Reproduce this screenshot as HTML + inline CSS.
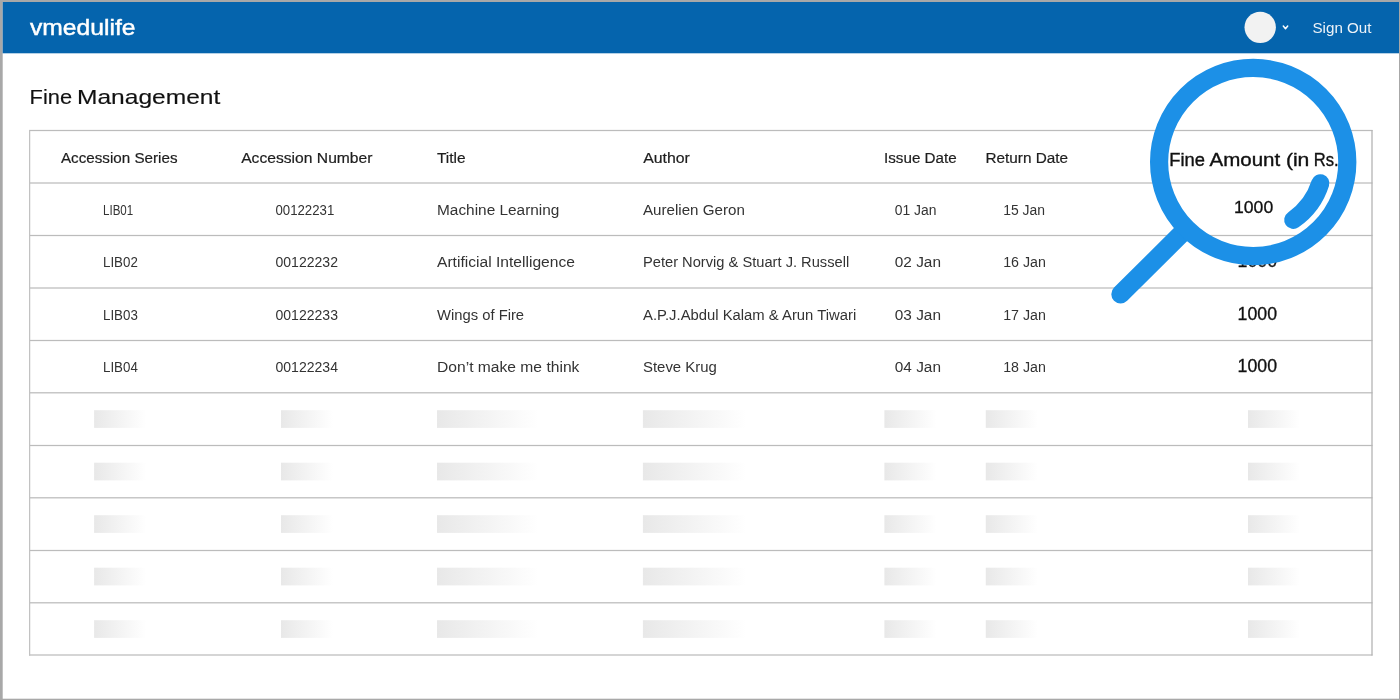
<!DOCTYPE html>
<html><head><meta charset="utf-8"><style>
html,body{margin:0;padding:0;width:1400px;height:700px;overflow:hidden;background:#a8a8a8;}
svg{display:block;font-family:"Liberation Sans", sans-serif;will-change:transform;}
</style></head><body>
<svg width="1400" height="700" viewBox="0 0 1400 700">
<rect x="0" y="0" width="1400" height="700" fill="#a8a8a8"/>
<rect x="2.7" y="2" width="1396.3" height="696.7" fill="#ffffff"/>
<rect x="2.7" y="2" width="1396.3" height="51.3" fill="#0564ad"/>
<text x="30.0" y="34.6" font-size="22.6" font-weight="400" fill="#ffffff" stroke="#ffffff" stroke-width="0.45" textLength="105.5" lengthAdjust="spacingAndGlyphs">vmedulife</text>
<circle cx="1260.2" cy="27.35" r="15.7" fill="#f2f2f2"/>
<path d="M1283.3 26.1 L1285.5 28.7 L1287.7 26.1" stroke="#ffffff" stroke-width="1.5" fill="none" stroke-linecap="round" stroke-linejoin="round"/>
<text x="1312.5" y="32.9" font-size="14.8" font-weight="400" fill="#eef3f8" textLength="59" lengthAdjust="spacingAndGlyphs">Sign Out</text>
<text x="29.6" y="104.3" font-size="21" font-weight="400" fill="#111111" stroke="#111111" stroke-width="0.15" textLength="42.5" lengthAdjust="spacingAndGlyphs">Fine</text>
<text x="77.0" y="104.3" font-size="21" font-weight="400" fill="#111111" stroke="#111111" stroke-width="0.15" textLength="143.3" lengthAdjust="spacingAndGlyphs">Management</text>
<rect x="30" y="130" width="1" height="525.6" fill="#f0f0f0"/>
<rect x="29" y="129.875" width="1343.5" height="1.25" fill="#bcbcbc"/>
<rect x="29" y="182.375" width="1343.5" height="1.25" fill="#bcbcbc"/>
<rect x="29" y="234.875" width="1343.5" height="1.25" fill="#bcbcbc"/>
<rect x="29" y="287.375" width="1343.5" height="1.25" fill="#bcbcbc"/>
<rect x="29" y="339.875" width="1343.5" height="1.25" fill="#bcbcbc"/>
<rect x="29" y="392.175" width="1343.5" height="1.25" fill="#bcbcbc"/>
<rect x="29" y="444.875" width="1343.5" height="1.25" fill="#bcbcbc"/>
<rect x="29" y="497.175" width="1343.5" height="1.25" fill="#bcbcbc"/>
<rect x="29" y="549.875" width="1343.5" height="1.25" fill="#bcbcbc"/>
<rect x="29" y="602.175" width="1343.5" height="1.25" fill="#bcbcbc"/>
<rect x="29" y="654.375" width="1343.5" height="1.25" fill="#bcbcbc"/>
<rect x="29" y="130" width="1" height="525.6" fill="#c2c2c2"/>
<rect x="1371.35" y="130" width="1.3" height="525.6" fill="#b4b4b4"/>
<text x="60.95" y="162.5" font-size="14.7" font-weight="400" fill="#1e1e1e" stroke="#1e1e1e" stroke-width="0.2" textLength="116.55" lengthAdjust="spacingAndGlyphs">Accession Series</text>
<text x="241.2" y="162.5" font-size="14.7" font-weight="400" fill="#1e1e1e" stroke="#1e1e1e" stroke-width="0.2" textLength="131.3" lengthAdjust="spacingAndGlyphs">Accession Number</text>
<text x="436.9" y="162.5" font-size="14.7" font-weight="400" fill="#1e1e1e" stroke="#1e1e1e" stroke-width="0.2" textLength="28.600000000000012" lengthAdjust="spacingAndGlyphs">Title</text>
<text x="643.2" y="162.5" font-size="14.7" font-weight="400" fill="#1e1e1e" stroke="#1e1e1e" stroke-width="0.2" textLength="46.699999999999974" lengthAdjust="spacingAndGlyphs">Author</text>
<text x="884.0" y="162.5" font-size="14.7" font-weight="400" fill="#1e1e1e" stroke="#1e1e1e" stroke-width="0.2" textLength="72.70000000000009" lengthAdjust="spacingAndGlyphs">Issue Date</text>
<text x="985.5" y="162.5" font-size="14.7" font-weight="400" fill="#1e1e1e" stroke="#1e1e1e" stroke-width="0.2" textLength="82.59999999999995" lengthAdjust="spacingAndGlyphs">Return Date</text>
<text x="103.0" y="214.75" font-size="14" font-weight="400" fill="#333333" textLength="30.2" lengthAdjust="spacingAndGlyphs">LIB01</text>
<text x="275.5" y="214.75" font-size="14" font-weight="400" fill="#333333" textLength="58.75" lengthAdjust="spacingAndGlyphs">00122231</text>
<text x="437.0" y="214.75" font-size="14" font-weight="400" fill="#333333" textLength="122.4" lengthAdjust="spacingAndGlyphs">Machine Learning</text>
<text x="643.0" y="214.75" font-size="14" font-weight="400" fill="#333333" textLength="101.8" lengthAdjust="spacingAndGlyphs">Aurelien Geron</text>
<text x="894.8" y="214.75" font-size="14" font-weight="400" fill="#333333" textLength="41.7" lengthAdjust="spacingAndGlyphs">01 Jan</text>
<text x="1003.2" y="214.75" font-size="14" font-weight="400" fill="#333333" textLength="41.800000000000004" lengthAdjust="spacingAndGlyphs">15 Jan</text>
<text x="103.0" y="267.25" font-size="14" font-weight="400" fill="#333333" textLength="34.8" lengthAdjust="spacingAndGlyphs">LIB02</text>
<text x="275.5" y="267.25" font-size="14" font-weight="400" fill="#333333" textLength="62.5" lengthAdjust="spacingAndGlyphs">00122232</text>
<text x="437.0" y="267.25" font-size="14" font-weight="400" fill="#333333" textLength="137.89999999999998" lengthAdjust="spacingAndGlyphs">Artificial Intelligence</text>
<text x="643.0" y="267.25" font-size="14" font-weight="400" fill="#333333" textLength="206.2" lengthAdjust="spacingAndGlyphs">Peter Norvig &amp; Stuart J. Russell</text>
<text x="894.8" y="267.25" font-size="14" font-weight="400" fill="#333333" textLength="46.2" lengthAdjust="spacingAndGlyphs">02 Jan</text>
<text x="1003.2" y="267.25" font-size="14" font-weight="400" fill="#333333" textLength="42.7" lengthAdjust="spacingAndGlyphs">16 Jan</text>
<text x="1237.6" y="267.1" font-size="17.5" font-weight="400" fill="#111111" stroke="#111111" stroke-width="0.3" textLength="39.4" lengthAdjust="spacingAndGlyphs">1000</text>
<text x="103.0" y="319.75" font-size="14" font-weight="400" fill="#333333" textLength="34.8" lengthAdjust="spacingAndGlyphs">LIB03</text>
<text x="275.5" y="319.75" font-size="14" font-weight="400" fill="#333333" textLength="62.5" lengthAdjust="spacingAndGlyphs">00122233</text>
<text x="437.0" y="319.75" font-size="14" font-weight="400" fill="#333333" textLength="87.10000000000001" lengthAdjust="spacingAndGlyphs">Wings of Fire</text>
<text x="643.0" y="319.75" font-size="14" font-weight="400" fill="#333333" textLength="213.2" lengthAdjust="spacingAndGlyphs">A.P.J.Abdul Kalam &amp; Arun Tiwari</text>
<text x="894.8" y="319.75" font-size="14" font-weight="400" fill="#333333" textLength="46.2" lengthAdjust="spacingAndGlyphs">03 Jan</text>
<text x="1003.2" y="319.75" font-size="14" font-weight="400" fill="#333333" textLength="42.7" lengthAdjust="spacingAndGlyphs">17 Jan</text>
<text x="1237.6" y="319.6" font-size="17.5" font-weight="400" fill="#111111" stroke="#111111" stroke-width="0.3" textLength="39.4" lengthAdjust="spacingAndGlyphs">1000</text>
<text x="103.0" y="372.25" font-size="14" font-weight="400" fill="#333333" textLength="34.8" lengthAdjust="spacingAndGlyphs">LIB04</text>
<text x="275.5" y="372.25" font-size="14" font-weight="400" fill="#333333" textLength="62.5" lengthAdjust="spacingAndGlyphs">00122234</text>
<text x="437.0" y="372.25" font-size="14" font-weight="400" fill="#333333" textLength="142.39999999999998" lengthAdjust="spacingAndGlyphs">Don’t make me think</text>
<text x="643.0" y="372.25" font-size="14" font-weight="400" fill="#333333" textLength="73.8" lengthAdjust="spacingAndGlyphs">Steve Krug</text>
<text x="894.8" y="372.25" font-size="14" font-weight="400" fill="#333333" textLength="46.2" lengthAdjust="spacingAndGlyphs">04 Jan</text>
<text x="1003.2" y="372.25" font-size="14" font-weight="400" fill="#333333" textLength="42.7" lengthAdjust="spacingAndGlyphs">18 Jan</text>
<text x="1237.6" y="372.1" font-size="17.5" font-weight="400" fill="#111111" stroke="#111111" stroke-width="0.3" textLength="39.4" lengthAdjust="spacingAndGlyphs">1000</text>
<defs><linearGradient id="sk" x1="0" x2="1" y1="0" y2="0"><stop offset="0" stop-color="#e8e8e8"/><stop offset="1" stop-color="#ffffff"/></linearGradient></defs>
<rect x="94.1" y="410.20" width="52" height="17.7" fill="url(#sk)"/>
<rect x="281" y="410.20" width="52" height="17.7" fill="url(#sk)"/>
<rect x="437" y="410.20" width="101" height="17.7" fill="url(#sk)"/>
<rect x="642.9" y="410.20" width="103" height="17.7" fill="url(#sk)"/>
<rect x="884.4" y="410.20" width="52" height="17.7" fill="url(#sk)"/>
<rect x="985.8" y="410.20" width="52" height="17.7" fill="url(#sk)"/>
<rect x="1248" y="410.20" width="52" height="17.7" fill="url(#sk)"/>
<rect x="94.1" y="462.70" width="52" height="17.7" fill="url(#sk)"/>
<rect x="281" y="462.70" width="52" height="17.7" fill="url(#sk)"/>
<rect x="437" y="462.70" width="101" height="17.7" fill="url(#sk)"/>
<rect x="642.9" y="462.70" width="103" height="17.7" fill="url(#sk)"/>
<rect x="884.4" y="462.70" width="52" height="17.7" fill="url(#sk)"/>
<rect x="985.8" y="462.70" width="52" height="17.7" fill="url(#sk)"/>
<rect x="1248" y="462.70" width="52" height="17.7" fill="url(#sk)"/>
<rect x="94.1" y="515.20" width="52" height="17.7" fill="url(#sk)"/>
<rect x="281" y="515.20" width="52" height="17.7" fill="url(#sk)"/>
<rect x="437" y="515.20" width="101" height="17.7" fill="url(#sk)"/>
<rect x="642.9" y="515.20" width="103" height="17.7" fill="url(#sk)"/>
<rect x="884.4" y="515.20" width="52" height="17.7" fill="url(#sk)"/>
<rect x="985.8" y="515.20" width="52" height="17.7" fill="url(#sk)"/>
<rect x="1248" y="515.20" width="52" height="17.7" fill="url(#sk)"/>
<rect x="94.1" y="567.70" width="52" height="17.7" fill="url(#sk)"/>
<rect x="281" y="567.70" width="52" height="17.7" fill="url(#sk)"/>
<rect x="437" y="567.70" width="101" height="17.7" fill="url(#sk)"/>
<rect x="642.9" y="567.70" width="103" height="17.7" fill="url(#sk)"/>
<rect x="884.4" y="567.70" width="52" height="17.7" fill="url(#sk)"/>
<rect x="985.8" y="567.70" width="52" height="17.7" fill="url(#sk)"/>
<rect x="1248" y="567.70" width="52" height="17.7" fill="url(#sk)"/>
<rect x="94.1" y="620.20" width="52" height="17.7" fill="url(#sk)"/>
<rect x="281" y="620.20" width="52" height="17.7" fill="url(#sk)"/>
<rect x="437" y="620.20" width="101" height="17.7" fill="url(#sk)"/>
<rect x="642.9" y="620.20" width="103" height="17.7" fill="url(#sk)"/>
<rect x="884.4" y="620.20" width="52" height="17.7" fill="url(#sk)"/>
<rect x="985.8" y="620.20" width="52" height="17.7" fill="url(#sk)"/>
<rect x="1248" y="620.20" width="52" height="17.7" fill="url(#sk)"/>
<defs><clipPath id="lens"><circle cx="1253.2" cy="162" r="86"/></clipPath></defs>
<g clip-path="url(#lens)"><circle cx="1253.2" cy="162" r="86" fill="#ffffff"/>
<rect x="1100" y="129.875" width="272" height="1.25" fill="#bcbcbc"/>
<rect x="1100" y="182.375" width="272" height="1.25" fill="#bcbcbc"/>
<rect x="1100" y="234.875" width="272" height="1.25" fill="#bcbcbc"/>
<text x="1169.2" y="165.5" font-size="17.6" font-weight="400" fill="#111111" stroke="#111111" stroke-width="0.35" textLength="35.69999999999986" lengthAdjust="spacingAndGlyphs">Fine</text>
<text x="1209.5" y="165.5" font-size="17.6" font-weight="400" fill="#111111" stroke="#111111" stroke-width="0.35" textLength="70.70000000000009" lengthAdjust="spacingAndGlyphs">Amount</text>
<text x="1285.9" y="165.5" font-size="17.6" font-weight="400" fill="#111111" stroke="#111111" stroke-width="0.35" textLength="23.49999999999982" lengthAdjust="spacingAndGlyphs">(in</text>
<text x="1313.7" y="165.5" font-size="17.6" font-weight="400" fill="#111111" stroke="#111111" stroke-width="0.35" textLength="24.89999999999991" lengthAdjust="spacingAndGlyphs">Rs.</text>
<text x="1234.0" y="212.6" font-size="17.2" font-weight="400" fill="#111111" stroke="#111111" stroke-width="0.3" textLength="39.2" lengthAdjust="spacingAndGlyphs">1000</text>
</g>
<line x1="1186.02" y1="229.18" x2="1120.6" y2="294.2" stroke="#1c90e7" stroke-width="18.6" stroke-linecap="round"/>
<circle cx="1253.2" cy="162" r="94.1" fill="none" stroke="#1c90e7" stroke-width="18.2"/>
<path d="M1320.30 183.29 A70.4 70.4 0 0 1 1293.28 219.88" fill="none" stroke="#1c90e7" stroke-width="18.2" stroke-linecap="round"/>
</svg>
</body></html>
